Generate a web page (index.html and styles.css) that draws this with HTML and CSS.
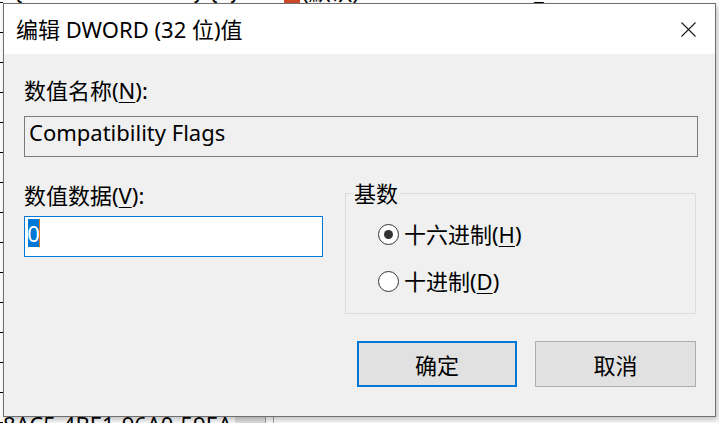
FILE: index.html
```html
<!DOCTYPE html>
<html lang="zh-CN">
<head>
<meta charset="utf-8">
<title>编辑 DWORD (32 位)值</title>
<link rel="stylesheet" href="styles.css">
</head>
<body>
<div class="desktop">
  <div class="tree-ticks"></div>
  <div class="bg-row bg-top">
    <span class="bg-key">{B383-4D30-A0E0}-{0}</span>
    <span class="bg-icon"></span>
    <span class="bg-name">(默认)</span>
    <span class="bg-type">REG_SZ</span>
  </div>
  <div class="bg-row bg-bottom">
    <span class="bg-key">-8AC5-4BE1-96A0-59EA</span>
    <span class="bg-sel"></span>
  </div>

  <div class="window">
    <div class="titlebar">
      <span class="title">编辑 DWORD (32 位)值</span>
      <svg class="close" width="15" height="15" viewBox="0 0 15 15">
        <path d="M0.5 0.5 L14.5 14.5 M14.5 0.5 L0.5 14.5" stroke="#1a1a1a" stroke-width="1.1" fill="none"/>
      </svg>
    </div>
    <div class="content">
      <div class="label name-label">数值名称(<u>N</u>):</div>
      <div class="field readonly">Compatibility Flags</div>
      <div class="row">
        <div class="left-col">
          <div class="label">数值数据(<u>V</u>):</div>
          <div class="field editable"><span class="sel">0</span><span class="caret"></span></div>
        </div>
        <fieldset class="group">
          <legend>基数</legend>
          <div class="options">
            <label class="radio"><span class="dot checked"></span>十六进制(<u>H</u>)</label>
            <label class="radio"><span class="dot"></span>十进制(<u>D</u>)</label>
          </div>
        </fieldset>
      </div>
      <div class="buttons">
        <button class="btn default">确定</button>
        <button class="btn">取消</button>
      </div>
    </div>
  </div>
</div>
</body>
</html>
```

FILE: styles.css
```css
* { box-sizing: border-box; }
html, body { margin: 0; padding: 0; }
body {
  width: 719px;
  height: 423px;
  overflow: hidden;
  background: #ffffff;
  font-family: "Noto Sans", "Noto Sans CJK SC", sans-serif;
  color: #000;
}
.desktop {
  position: relative;
  width: 719px;
  height: 423px;
  overflow: hidden;
  background: #fff;
}
.tree-ticks {
  position: absolute;
  left: 0;
  top: 0;
  width: 3px;
  height: 423px;
  background-image: linear-gradient(to bottom, transparent 0, transparent 29px, #000 29px, #000 30px);
  background-size: 3px 30px;
  background-position: 0 3px;
  background-repeat: repeat-y;
}
.bg-row {
  position: absolute;
  left: 0;
  width: 719px;
  height: 30px;
  font-size: 22px;
  line-height: 30px;
  white-space: nowrap;
}
.bg-top { top: -24px; }
.bg-bottom { top: 409px; }
.bg-key { position: absolute; left: 14px; }
.bg-bottom .bg-key { left: -4px; }
.bg-icon { position: absolute; left: 284px; top: 16px; width: 16px; height: 14px; background: #d04a2a; }
.bg-name { position: absolute; left: 302px; }
.bg-type { position: absolute; left: 492px; }
.bg-sel {
  position: absolute;
  left: 235px; top: 0;
  width: 31px; height: 30px;
  background: #e3e3e3;
  border-right: 1px solid #a0a0a0;
}
.bg-bottom::after {
  content: "";
  position: absolute;
  left: 273px; top: 0;
  width: 1px; height: 30px;
  background: #a0a0a0;
}

.window {
  position: absolute;
  left: 3px;
  top: 3px;
  width: 713px;
  height: 414px;
  border: 1px solid #707070;
  background: #f0f0f0;
  box-shadow: 2px 3px 6px rgba(0,0,0,0.25);
  display: flex;
  flex-direction: column;
}
.titlebar {
  height: 50px;
  background: #fff;
  display: flex;
  align-items: center;
  justify-content: space-between;
  padding: 0 19px 0 12px;
  flex: none;
}
.title {
  font-size: 22px;
  line-height: 30px;
}
.close { display: block; }

.content {
  flex: 1;
  padding: 21px 18px 0 20px;
  display: flex;
  flex-direction: column;
}
.label {
  font-size: 22px;
  line-height: 30px;
  height: 30px;
  white-space: nowrap;
}
.label u, .radio u { text-decoration-thickness: 1px; text-underline-offset: 3px; }
.field {
  height: 41px;
  font-size: 22px;
  line-height: 30px;
  padding: 0 4px;
  white-space: nowrap;
}
.name-label { margin-bottom: 11px; }
.readonly {
  border: 1px solid #7a7a7a;
  background: #f0f0f0;
  margin-right: -1px;
}
.row {
  display: flex;
  margin-top: 23px;
  gap: 22px;
}
.left-col { width: 299px; flex: none; }
.left-col .label { margin-bottom: 6px; }
.editable {
  border: 1px solid #0078d7;
  background: #fff;
  padding: 2px 3px;
  display: flex;
  align-items: flex-start;
}
.sel {
  background: #0078d7;
  color: #fff;
  height: 28px;
  line-height: 28px;
  width: 11px;
  overflow: visible;
  display: flex;
  justify-content: center;
}
.caret {
  width: 1px;
  height: 28px;
  background: #e07a10;
}
.group {
  margin: 2px 0 0 0;
  padding: 0;
  width: 351px;
  height: 132px;
  border: 1px solid #dcdcdc;
  min-width: 0;
}
.group legend {
  font-size: 22px;
  line-height: 22px;
  padding: 0 2px;
  margin-left: 6px;
}
.options {
  padding: 15px 0 0 32px;
}
.radio {
  display: flex;
  align-items: center;
  font-size: 22px;
  line-height: 30px;
  height: 30px;
  margin-bottom: 17px;
  white-space: nowrap;
}
.dot {
  width: 21px;
  height: 21px;
  border: 1px solid #333;
  border-radius: 50%;
  background: #fff;
  margin-right: 5px;
  position: relative;
  flex: none;
}
.dot.checked::after {
  content: "";
  position: absolute;
  left: 5px; top: 5px;
  width: 9px; height: 9px;
  border-radius: 50%;
  background: #333;
}
.buttons {
  display: flex;
  justify-content: flex-end;
  gap: 18px;
  margin-top: 27px;
  padding-right: 1px;
}
.btn {
  width: 161px;
  height: 46px;
  background: #e1e1e1;
  border: 1px solid #adadad;
  font-family: "Noto Sans", "Noto Sans CJK SC", sans-serif;
  font-size: 22px;
  color: #000;
  padding: 0;
  margin: 0;
}
.btn.default { border: 2px solid #0078d7; width: 160px; }
```
